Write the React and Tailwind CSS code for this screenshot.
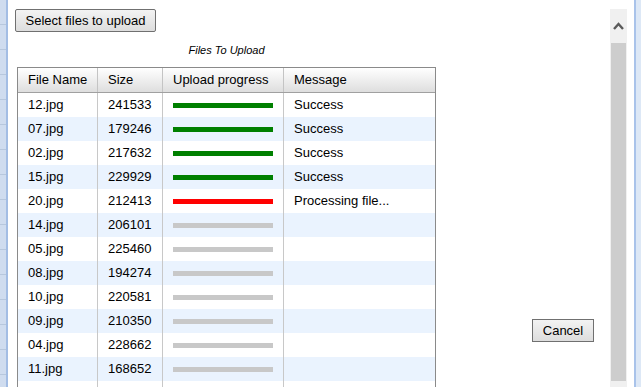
const rows = [
  ["12.jpg", "241533", "done", "Success"],
  ["07.jpg", "179246", "done", "Success"],
  ["02.jpg", "217632", "done", "Success"],
  ["15.jpg", "229929", "done", "Success"],
  ["20.jpg", "212413", "fail", "Processing file..."],
  ["14.jpg", "206101", "wait", ""],
  ["05.jpg", "225460", "wait", ""],
  ["08.jpg", "194274", "wait", ""],
  ["10.jpg", "220581", "wait", ""],
  ["09.jpg", "210350", "wait", ""],
  ["04.jpg", "228662", "wait", ""],
  ["11.jpg", "168652", "wait", ""],
  ["", "", "none", ""],
];

function Bar({ state }) {
  if (state === "none") return null;
  const cls =
    state === "done"
      ? "bg-[#008000]"
      : state === "fail"
      ? "bg-[#ff0000]"
      : "bg-[#c8c8c8]";
  return <div className={"h-[5px] w-[100px] " + cls} />;
}

export default function App() {
  return (
    <div className="flex h-[387px] w-[641px] overflow-hidden bg-white font-['Liberation_Sans',Arial,sans-serif] text-[13px] text-black">
      <div className="w-[6px] shrink-0 bg-[#cfdcef] bg-[repeating-linear-gradient(to_bottom,transparent_0px,transparent_24px,#b7c7dd_24px,#b7c7dd_25px)]" />
      <div className="w-[2px] shrink-0 bg-[#a3bde4]" />
      <div className="flex w-[602px] shrink-0">
        <div className="flex w-[428px] shrink-0 flex-col pl-[7px] pt-[9px]">
          <button className="flex h-[23px] w-[141px] shrink-0 items-center justify-center rounded-[2px] border border-[#707070] bg-gradient-to-b from-[#f3f3f3] to-[#dddddd] text-[13px] leading-none text-black">
            Select files to upload
          </button>
          <div className="ml-[2px] mt-[12px] w-[419px] shrink-0 text-center text-[11px] italic leading-[13px]">
            Files To Upload
          </div>
          <div className="ml-[2px] mt-[10px] w-[419px] shrink-0 border-l border-r border-t border-[#8a8a8a]">
            <div className="flex h-[25px] border-b border-[#a0a0a0] bg-gradient-to-b from-white to-[#dedede] whitespace-nowrap">
              <div className="flex w-[80px] shrink-0 items-center border-r border-[#c4c4c4] px-[10px]">File Name</div>
              <div className="flex w-[65px] shrink-0 items-center border-r border-[#c4c4c4] px-[10px]">Size</div>
              <div className="flex w-[121px] shrink-0 items-center border-r border-[#c4c4c4] px-[10px]">Upload progress</div>
              <div className="flex w-[151px] shrink-0 items-center px-[10px]">Message</div>
            </div>
            {rows.map((r, i) => (
              <div
                key={i}
                className={"flex h-[24px] whitespace-nowrap " + (i % 2 === 1 ? "bg-[#eaf3fe]" : "bg-white")}
              >
                <div className="flex w-[80px] shrink-0 items-center border-r border-[#c8c8c8] px-[10px]">{r[0]}</div>
                <div className="flex w-[65px] shrink-0 items-center border-r border-[#c8c8c8] px-[10px]">{r[1]}</div>
                <div className="flex w-[121px] shrink-0 items-center border-r border-[#c8c8c8] px-[10px]">
                  <Bar state={r[2]} />
                </div>
                <div className="flex w-[151px] shrink-0 items-center px-[10px]">{r[3]}</div>
              </div>
            ))}
          </div>
        </div>
        <div className="flex flex-1 flex-col items-end pr-[16px] pt-[319px]">
          <button className="flex h-[23px] w-[62px] shrink-0 items-center justify-center border border-[#707070] bg-gradient-to-b from-[#f3f3f3] to-[#dddddd] text-[13px] leading-none text-black">
            Cancel
          </button>
        </div>
      </div>
      <div className="flex w-[17px] shrink-0 flex-col pt-[9px]">
        <div className="flex flex-1 flex-col bg-[#f0f0f0]">
          <div className="flex h-[34px] shrink-0 items-center justify-center">
            <svg width="11" height="8" viewBox="0 0 11 8">
              <polyline points="1,7 5.5,2 10,7" fill="none" stroke="#5a5a5a" strokeWidth="2.4" />
            </svg>
          </div>
          <div className="mx-[1px] h-[338px] shrink-0 bg-[#cdcdcd]" />
        </div>
      </div>
      <div className="w-[7px] shrink-0 bg-white" />
      <div className="w-[2px] shrink-0 bg-[#a9c3ea]" />
      <div className="w-[5px] shrink-0 bg-[#dde8f6]" />
    </div>
  );
}
